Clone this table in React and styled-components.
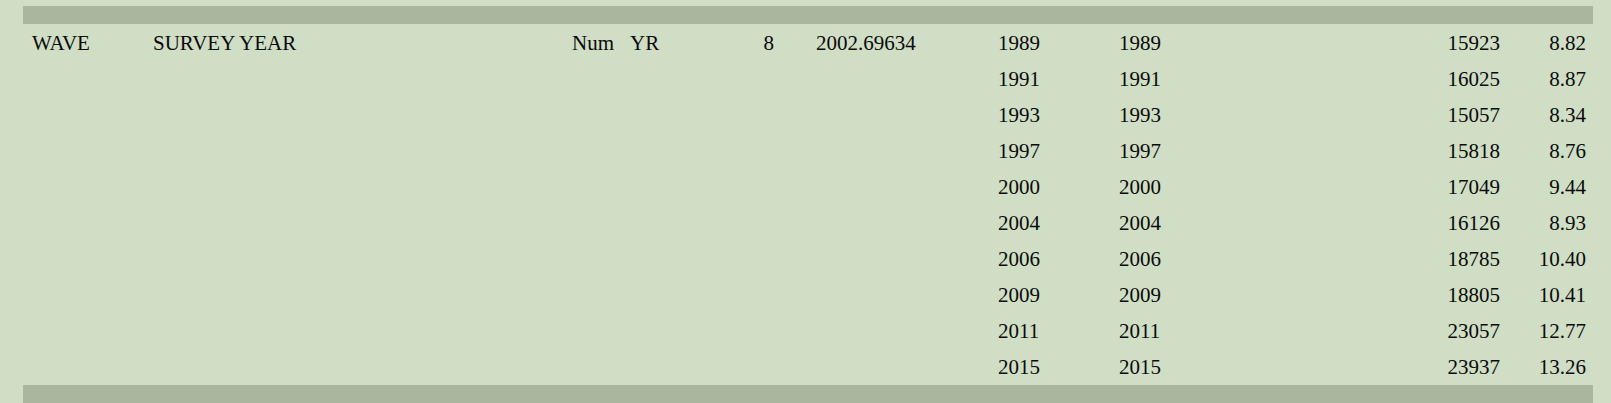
import React from "react";
import styled, { createGlobalStyle } from "styled-components";

const GlobalStyle = createGlobalStyle`
  html, body {
    margin: 0;
    padding: 0;
    background: #cfdec4;
  }
`;

const Page = styled.div`
  padding: 6px 18px 0 23px;
  font-family: "Liberation Serif", "Times New Roman", serif;
  font-size: 21px;
  color: #0b0b0b;
`;

const Bar = styled.div`
  height: 18px;
  background: #aab79f;
  margin-bottom: ${(p) => (p.$top ? "1px" : "0")};
`;

const Grid = styled.div`
  display: grid;
  grid-template-columns: 121px 419px 58px 70px 116px 182px 121px 1fr 120px 86px;
  grid-auto-rows: 36px;
  padding: 0 7px 0 9px;
  line-height: 36px;
`;

const Cell = styled.div`
  text-align: ${(p) => (p.$right ? "right" : "left")};
  padding-right: ${(p) => p.$pr || 0}px;
  white-space: nowrap;
`;

const rows = [
  ["1989", "15923", "8.82"],
  ["1991", "16025", "8.87"],
  ["1993", "15057", "8.34"],
  ["1997", "15818", "8.76"],
  ["2000", "17049", "9.44"],
  ["2004", "16126", "8.93"],
  ["2006", "18785", "10.40"],
  ["2009", "18805", "10.41"],
  ["2011", "23057", "12.77"],
  ["2015", "23937", "13.26"],
];

const App = () => {
  return (
    <>
      <GlobalStyle />
      <Page>
        <Bar $top />
        <Grid>
          {rows.map(([year, count, pct], i) => (
            <React.Fragment key={year}>
              <Cell>{i === 0 ? "WAVE" : ""}</Cell>
              <Cell>{i === 0 ? "SURVEY YEAR" : ""}</Cell>
              <Cell>{i === 0 ? "Num" : ""}</Cell>
              <Cell>{i === 0 ? "YR" : ""}</Cell>
              <Cell $right $pr={42}>{i === 0 ? "8" : ""}</Cell>
              <Cell>{i === 0 ? "2002.69634" : ""}</Cell>
              <Cell>{year}</Cell>
              <Cell>{year}</Cell>
              <Cell $right>{count}</Cell>
              <Cell $right>{pct}</Cell>
            </React.Fragment>
          ))}
        </Grid>
        <Bar />
      </Page>
    </>
  );
};

export default App;
